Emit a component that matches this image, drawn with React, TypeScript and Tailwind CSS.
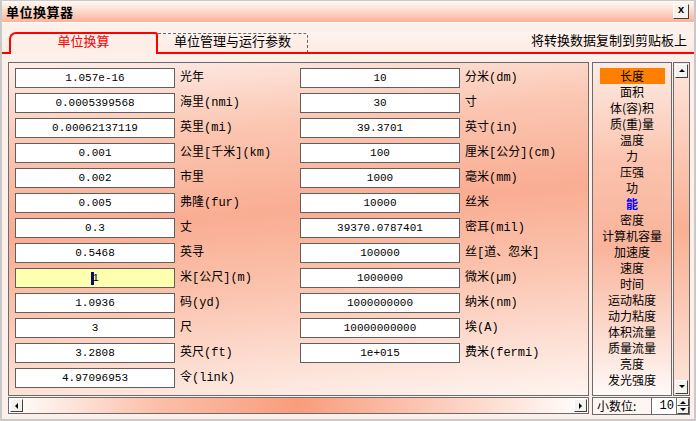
import React from 'react';

const left: [string, string][] = [
	['1.057e-16', '光年'],
	['0.0005399568', '海里(nmi)'],
	['0.00062137119', '英里(mi)'],
	['0.001', '公里[千米](km)'],
	['0.002', '市里'],
	['0.005', '弗隆(fur)'],
	['0.3', '丈'],
	['0.5468', '英寻'],
	['1', '米[公尺](m)'],
	['1.0936', '码(yd)'],
	['3', '尺'],
	['3.2808', '英尺(ft)'],
	['4.97096953', '令(link)'],
];

const right: [string, string][] = [
	['10', '分米(dm)'],
	['30', '寸'],
	['39.3701', '英寸(in)'],
	['100', '厘米[公分](cm)'],
	['1000', '毫米(mm)'],
	['10000', '丝米'],
	['39370.0787401', '密耳(mil)'],
	['100000', '丝[道、忽米]'],
	['1000000', '微米(µm)'],
	['1000000000', '纳米(nm)'],
	['10000000000', '埃(A)'],
	['1e+015', '费米(fermi)'],
];

const kinds = [
	'长度', '面积', '体(容)积', '质(重)量', '温度', '力', '压强', '功', '能', '密度',
	'计算机容量', '加速度', '速度', '时间', '运动粘度', '动力粘度', '体积流量', '质量流量', '亮度', '发光强度',
];

const Arrow = ({ dir }: { dir: 'up' | 'down' | 'left' | 'right' }) => {
	const pts = {
		up: '1,5 4,2 7,5',
		down: '1,2 4,5 7,2',
		left: '5,1 2,4 5,7',
		right: '2,1 5,4 2,7',
	}[dir];
	return (
		<svg width="8" height="8" viewBox="0 0 8 8">
			<polygon points={pts} fill="#000" />
		</svg>
	);
};

const Btn = ({ children, className = '' }: { children: React.ReactNode; className?: string }) => (
	<div
		className={`flex items-center justify-center bg-[#f4f2ee] border-t border-l border-t-white border-l-white border-b border-r border-b-[#404040] border-r-[#404040] ${className}`}
	>
		{children}
	</div>
);

const Row = ({ value, label, active }: { value: string; label: string; active?: boolean }) => (
	<div className="flex items-center h-[20px]">
		<div
			className={`w-[160px] h-[20px] border border-[#5f5f5f] flex items-center justify-center text-[11px] font-['Liberation_Mono',monospace] ${
				active ? 'bg-[#ffffb0]' : 'bg-white'
			}`}
		>
			{active && <span className="w-[3px] h-[13px] bg-[#0a0a6e] mr-[-2px]" />}
			{value}
		</div>
		<span className="ml-[5px] text-[12px] leading-none whitespace-nowrap">{label}</span>
	</div>
);

export default function App() {
	return (
		<div className="w-[696px] h-[421px] flex flex-col bg-[#fdf0ea] border-l-2 border-r-2 border-b-2 border-t border-[#c9c9c9] overflow-hidden font-['Liberation_Mono','Noto_Sans_CJK_SC',monospace] text-black">
			{/* title bar */}
			<div className="h-[21px] flex items-center justify-between px-[4px] bg-[linear-gradient(180deg,#fffaf7_0%,#fde0d3_40%,#fbb297_100%)]">
				<span className="text-[13px] font-bold tracking-[0.5px] font-['Noto_Sans_CJK_SC',sans-serif]">单位换算器</span>
				<Btn className="w-[16px] h-[15px] mr-[1px]">
					<span className="text-[11px] font-bold leading-none mt-[-2px]">x</span>
				</Btn>
			</div>
			<div className="h-[1px] bg-white" />

			{/* tabs */}
			<div className="mt-[9px] flex items-end h-[22px] bg-[linear-gradient(180deg,#fdf3ee,#fde9e1)]">
				<div className="w-[7px] border-b-2 border-[#ff0000]" />
				<div className="w-[149px] h-[22px] border-2 border-b-0 border-[#ff0000] rounded-tl-[7px] rounded-tr-[3px] flex items-center justify-center text-[#ff0000] text-[13px] pb-[2px] bg-[#fdeee7]">
					单位换算
				</div>
				<div className="border-b-2 border-[#ff0000]">
					<div className="w-[150px] h-[19px] border border-b-0 border-l-0 border-dashed border-[#666] flex items-center justify-center text-[13px] rounded-tr-[3px]">
						单位管理与运行参数
					</div>
				</div>
				<div className="flex-1 h-[22px] border-b-2 border-[#ff0000] flex items-center justify-end pr-[7px] pb-[1px] text-[13px]">
					将转换数据复制到剪贴板上
				</div>
			</div>

			{/* body */}
			<div className="flex mt-[8px] ml-[6px] gap-[3px]">
				<div className="flex flex-col">
					<div className="w-[581px] h-[334px] border border-[#6b6b6b] pl-[6px] pt-[5px] flex bg-[linear-gradient(175deg,#fdeee8_0%,#fbc6b2_22%,#f9ad92_45%,#fbc3ae_65%,#fef4f0_100%)]">
						<div className="w-[285px] flex flex-col gap-[5px]">
							{left.map(([v, l]) => (
								<Row key={l} value={v} label={l} active={v === '1'} />
							))}
						</div>
						<div className="flex flex-col gap-[5px]">
							{right.map(([v, l]) => (
								<Row key={l} value={v} label={l} />
							))}
						</div>
					</div>
					<div className="mt-[1px] w-[581px] h-[17px] border border-[#6b6b6b] flex items-center justify-between px-[1px] bg-[linear-gradient(90deg,#ffffff_0%,#fbc0aa_25%,#f99c7c_50%,#fcd3c4_78%,#ffffff_100%)]">
						<Btn className="w-[13px] h-[13px]">
							<Arrow dir="left" />
						</Btn>
						<Btn className="w-[13px] h-[13px]">
							<Arrow dir="right" />
						</Btn>
					</div>
				</div>

				<div className="flex flex-col">
					<div className="flex gap-[1px]">
						<div className="w-[80px] h-[334px] border border-[#6b6b6b] pt-[5px] flex flex-col items-center bg-[linear-gradient(180deg,#fdebe3_0%,#fbc3ae_30%,#f9b39a_55%,#fcd9cc_80%,#fffaf8_100%)]">
							{kinds.map((k, i) => (
								<div
									key={k}
									className={`h-[16px] leading-[16px] text-[12px] whitespace-nowrap overflow-hidden font-['Noto_Sans_CJK_SC',sans-serif] text-center ${
										i === 0 ? 'w-[65px] bg-[#ff8000]' : ''
									} ${k === '能' ? 'text-[#0000ff] font-bold' : ''}`}
								>
									{k}
								</div>
							))}
						</div>
						<div className="w-[17px] h-[334px] border border-[#6b6b6b] flex flex-col justify-between items-center py-[1px] bg-[linear-gradient(180deg,#fde6dc_0%,#f9b093_50%,#fde6dc_100%)]">
							<Btn className="w-[13px] h-[14px]">
								<Arrow dir="up" />
							</Btn>
							<Btn className="w-[13px] h-[14px]">
								<Arrow dir="down" />
							</Btn>
						</div>
					</div>
					<div className="mt-[1px] flex h-[18px]">
						<div className="w-[60px] border border-[#6b6b6b] flex items-center pl-[4px] text-[12px] bg-[#fef6f3] font-['Noto_Sans_CJK_SC',sans-serif]">
							小数位:
						</div>
						<div className="w-[25px] border border-l-0 border-[#6b6b6b] bg-white flex items-center justify-end pr-[2px] text-[12px]">
							10
						</div>
						<div className="w-[13px] flex flex-col border border-l-0 border-[#6b6b6b]">
							<Btn className="h-[8px]">
								<svg width="6" height="4" viewBox="0 0 6 4"><polygon points="0,4 3,1 6,4" fill="#000" /></svg>
							</Btn>
							<Btn className="h-[8px]">
								<svg width="6" height="4" viewBox="0 0 6 4"><polygon points="0,0 3,3 6,0" fill="#000" /></svg>
							</Btn>
						</div>
					</div>
				</div>
			</div>
		</div>
	);
}
